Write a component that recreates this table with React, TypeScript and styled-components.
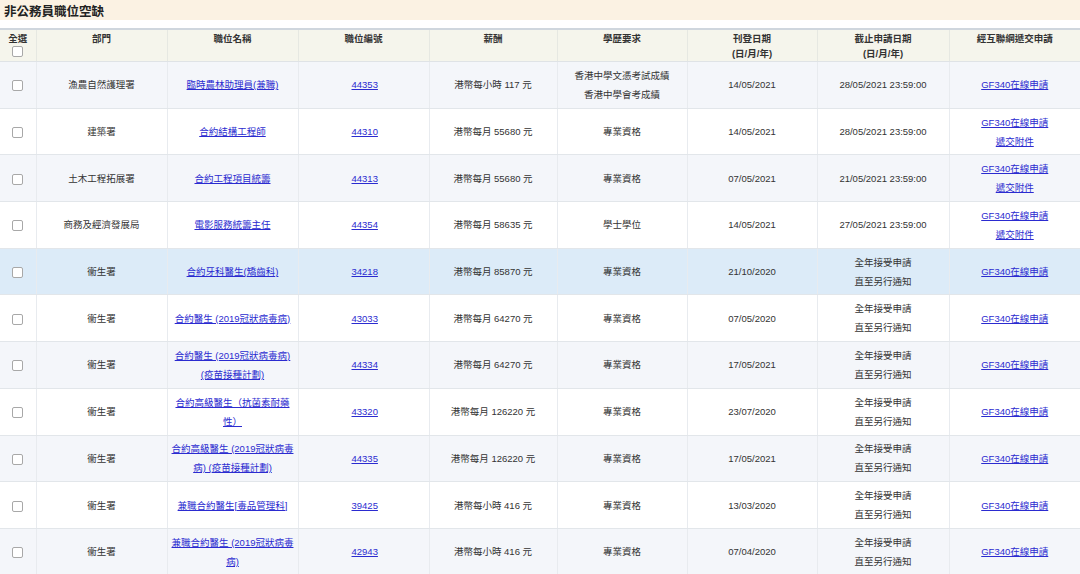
import React from "react";
import styled, { createGlobalStyle } from "styled-components";

const Global = createGlobalStyle`
  html, body { margin: 0; padding: 0; background: #ffffff; }
  body { font-family: "Liberation Sans", "Noto Sans CJK TC", sans-serif; color: #333; }
`;

const Page = styled.div`
  width: 1080px;
  height: 574px;
  overflow: hidden;
`;

const TitleBar = styled.div`
  height: 20px;
  background: #fbf2e3;
  display: flex;
  align-items: center;
  padding-left: 4px;
  font-size: 12.5px;
  font-weight: bold;
  color: #222;
  margin-bottom: 8px;
`;

const Table = styled.table`
  width: 1080px;
  border-collapse: collapse;
  table-layout: fixed;
  border-top: 2px solid #cfd6dd;
`;

const HeadCell = styled.th`
  background: #f5f5ec;
  font-size: 9.5px;
  font-weight: bold;
  color: #333;
  line-height: 15px;
  vertical-align: top;
  padding: 1px 2px 0;
  height: 29px;
  border-left: 1px solid #e6e8e2;
  border-bottom: 1px solid #dfe3e6;
  text-align: center;
  &:first-child { border-left: none; }
`;

const Row = styled.tr<{ $tone: "odd" | "even" | "hi" }>`
  background: ${(p) => (p.$tone === "hi" ? "#dcebf8" : p.$tone === "odd" ? "#f4f6fa" : "#ffffff")};
`;

const Cell = styled.td`
  height: 45.7px;
  font-size: 9.5px;
  line-height: 19px;
  text-align: center;
  vertical-align: middle;
  padding: 0 4px;
  border-left: 1px solid #e8ebef;
  border-bottom: 1px solid #e2e6ea;
  color: #333;
  &:first-child { border-left: none; }
`;

const NumCell = styled(Cell)`
  text-align: left;
  padding-left: 53px;
`;

const Link = styled.a`
  color: #2b2bd0;
  text-decoration: underline;
  cursor: pointer;
`;

const Box = styled.span`
  display: inline-block;
  width: 9px;
  height: 9px;
  border: 1px solid #a8a8a8;
  border-radius: 2px;
  background: #fff;
  vertical-align: middle;
`;

const HeadBox = styled(Box)`
  display: block;
  margin: 0 auto;
`;

const Line = styled.div``;

const TitleWrap = styled.div`
  max-width: 122px;
  margin: 0 auto;
`;

type Job = {
  dept: string;
  title: string;
  no: string;
  pay: string;
  edu: string[];
  pub: string;
  close: string[];
  attach: boolean;
};

const jobs: Job[] = [
  { dept: "漁農自然護理署", title: "臨時農林助理員(兼職)", no: "44353", pay: "港幣每小時 117 元", edu: ["香港中學文憑考試成績", "香港中學會考成績"], pub: "14/05/2021", close: ["28/05/2021 23:59:00"], attach: false },
  { dept: "建築署", title: "合約結構工程師", no: "44310", pay: "港幣每月 55680 元", edu: ["專業資格"], pub: "14/05/2021", close: ["28/05/2021 23:59:00"], attach: true },
  { dept: "土木工程拓展署", title: "合約工程項目統籌", no: "44313", pay: "港幣每月 55680 元", edu: ["專業資格"], pub: "07/05/2021", close: ["21/05/2021 23:59:00"], attach: true },
  { dept: "商務及經濟發展局", title: "電影服務統籌主任", no: "44354", pay: "港幣每月 58635 元", edu: ["學士學位"], pub: "14/05/2021", close: ["27/05/2021 23:59:00"], attach: true },
  { dept: "衞生署", title: "合約牙科醫生(矯齒科)", no: "34218", pay: "港幣每月 85870 元", edu: ["專業資格"], pub: "21/10/2020", close: ["全年接受申請", "直至另行通知"], attach: false },
  { dept: "衞生署", title: "合約醫生 (2019冠狀病毒病)", no: "43033", pay: "港幣每月 64270 元", edu: ["專業資格"], pub: "07/05/2020", close: ["全年接受申請", "直至另行通知"], attach: false },
  { dept: "衞生署", title: "合約醫生 (2019冠狀病毒病) (疫苗接種計劃)", no: "44334", pay: "港幣每月 64270 元", edu: ["專業資格"], pub: "17/05/2021", close: ["全年接受申請", "直至另行通知"], attach: false },
  { dept: "衞生署", title: "合約高級醫生（抗菌素耐藥性）", no: "43320", pay: "港幣每月 126220 元", edu: ["專業資格"], pub: "23/07/2020", close: ["全年接受申請", "直至另行通知"], attach: false },
  { dept: "衞生署", title: "合約高級醫生 (2019冠狀病毒病) (疫苗接種計劃)", no: "44335", pay: "港幣每月 126220 元", edu: ["專業資格"], pub: "17/05/2021", close: ["全年接受申請", "直至另行通知"], attach: false },
  { dept: "衞生署", title: "兼職合約醫生[毒品管理科]", no: "39425", pay: "港幣每小時 416 元", edu: ["專業資格"], pub: "13/03/2020", close: ["全年接受申請", "直至另行通知"], attach: false },
  { dept: "衞生署", title: "兼職合約醫生 (2019冠狀病毒病)", no: "42943", pay: "港幣每小時 416 元", edu: ["專業資格"], pub: "07/04/2020", close: ["全年接受申請", "直至另行通知"], attach: false },
];

const widths = [36, 131, 131, 131, 128, 130, 130, 132, 131];

export default function App() {
  return (
    <Page>
      <Global />
      <TitleBar>非公務員職位空缺</TitleBar>
      <Table>
        <colgroup>
          {widths.map((w, i) => (
            <col key={i} width={w} />
          ))}
        </colgroup>
        <thead>
          <tr>
            <HeadCell>
              全選
              <HeadBox />
            </HeadCell>
            <HeadCell>部門</HeadCell>
            <HeadCell>職位名稱</HeadCell>
            <HeadCell>職位編號</HeadCell>
            <HeadCell>薪酬</HeadCell>
            <HeadCell>學歷要求</HeadCell>
            <HeadCell>
              刊登日期
              <br />
              (日/月/年)
            </HeadCell>
            <HeadCell>
              截止申請日期
              <br />
              (日/月/年)
            </HeadCell>
            <HeadCell>經互聯網遞交申請</HeadCell>
          </tr>
        </thead>
        <tbody>
          {jobs.map((j, i) => (
            <Row key={j.no} $tone={i === 4 ? "hi" : i % 2 === 0 ? "odd" : "even"}>
              <Cell>
                <Box />
              </Cell>
              <Cell>{j.dept}</Cell>
              <Cell>
                <TitleWrap>
                  <Link>{j.title}</Link>
                </TitleWrap>
              </Cell>
              <NumCell>
                <Link>{j.no}</Link>
              </NumCell>
              <Cell>{j.pay}</Cell>
              <Cell>
                {j.edu.map((e) => (
                  <Line key={e}>{e}</Line>
                ))}
              </Cell>
              <Cell>{j.pub}</Cell>
              <Cell>
                {j.close.map((c) => (
                  <Line key={c}>{c}</Line>
                ))}
              </Cell>
              <Cell>
                <Line>
                  <Link>GF340在線申請</Link>
                </Line>
                {j.attach && (
                  <Line>
                    <Link>遞交附件</Link>
                  </Line>
                )}
              </Cell>
            </Row>
          ))}
        </tbody>
      </Table>
    </Page>
  );
}
